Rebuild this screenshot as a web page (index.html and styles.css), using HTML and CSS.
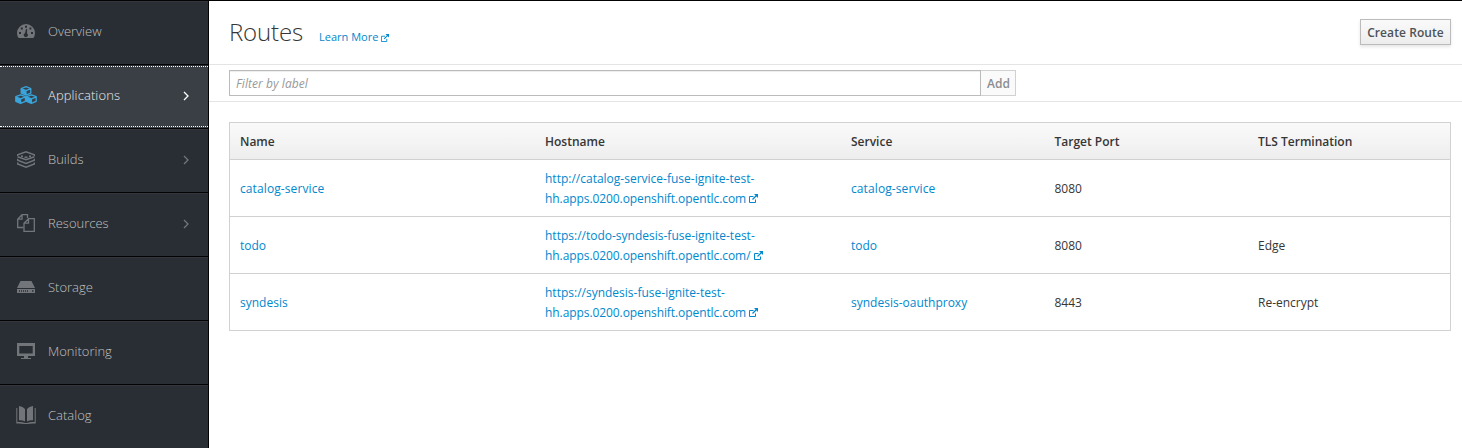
FILE: index.html
```html
<!DOCTYPE html>
<html lang="en">
<head>
<meta charset="utf-8">
<title>Routes</title>
<link rel="stylesheet" href="styles.css">
</head>
<body>
<svg class="defs" width="0" height="0">
  <symbol id="external" viewBox="0 0 9 9">
    <path d="M4.500 2.500H.5v6h6V5.500" fill="none" stroke="currentColor" stroke-width="1"/>
    <path d="M3.500 5.500 7.500 1.500" stroke="currentColor" stroke-width="1.200"/>
    <path d="M5 0h4v4z" fill="currentColor"/>
  </symbol>
  <symbol id="angle" viewBox="0 0 6 10">
    <path d="M1 1l4 4-4 4" fill="none" stroke="currentColor" stroke-width="1.300"/>
  </symbol>
</svg>
<div class="app">
  <nav class="sidebar">
    <a class="item">
      <span class="icon"><svg width="18" height="14" viewBox="0 0 18 14"><path fill="currentColor" fill-rule="evenodd" d="M1.600 14Q0 11.800 0 9a9 9 0 0 1 18 0q0 2.800-1.600 5zM8 1.800v2h2v-2zM3.800 3.600v2h2v-2zM12.400 3.600v2h2v-2zM2 8v2h2V8zM14 8v2h2V8zM9 5 8 9.200a2 2 0 1 0 2 .2L10.200 5z"/></svg></span>
      <span class="label">Overview</span>
    </a>
    <a class="item active">
      <span class="icon"><svg width="22" height="18" viewBox="0 0 22 18"><g fill="none" stroke="currentColor" stroke-width="1.300" stroke-linejoin="round"><path id="cube" d="M11 .7l4.800 1.800v4.600L11 9.100 6.200 7.100V2.500zM6.200 2.700 11 4.700l4.800-2M11 4.700v4.400"/><use href="#cube" x="-5.400" y="8.200"/><use href="#cube" x="5.400" y="8.200"/></g><path fill="currentColor" d="M6.200 2.600 11 4.700v4.400L6.200 7.100zM.8 10.800l4.800 2.100v4.400L.8 15.300zM11.600 10.800l4.800 2.100v4.400l-4.800-2z"/></svg></span>
      <span class="label">Applications</span>
      <svg class="chevron" width="6" height="10"><use href="#angle"/></svg>
    </a>
    <a class="item">
      <span class="icon"><svg width="18" height="17" viewBox="0 0 18 17"><g fill="none" stroke="currentColor" stroke-width="1.500"><path d="M.6 5V3.800L9 .9l8.400 2.900V5M.6 5.800 9 8.800l8.400-3"/><path d="M.6 7.800v1.400L9 12.400l8.400-3.200V7.800M.6 11.600V13L9 16.200l8.400-3.200v-1.400"/><path d="M4 5.300h2M7.500 6.300h3M12 5.300h2"/></g></svg></span>
      <span class="label">Builds</span>
      <svg class="chevron" width="6" height="10"><use href="#angle"/></svg>
    </a>
    <a class="item">
      <span class="icon"><svg width="18" height="18" viewBox="0 0 18 18"><g fill="none" stroke="currentColor" stroke-width="1.300"><path d="M6.500 13.500H.7V5.200L5 .7h5.500V4M5 .7v4.500H.7"/><path d="M11.500 4.700h5.800v12.600H7V9.200zM11.500 4.700v4.500H7"/></g></svg></span>
      <span class="label">Resources</span>
      <svg class="chevron" width="6" height="10"><use href="#angle"/></svg>
    </a>
    <a class="item">
      <span class="icon"><svg width="18" height="12" viewBox="0 0 18 12"><path fill="currentColor" fill-rule="evenodd" d="M3.500 0h11L18 7H0zM0 8h18v4H0zM2 9.200v1.600h1V9.200zM4 9.200v1.600h1V9.200zM6 9.200v1.600h1V9.200zM8 9.200v1.600h1V9.200zM10 9.200v1.600h1V9.200zM15 9.200v1.600h1.500V9.200z"/></svg></span>
      <span class="label">Storage</span>
    </a>
    <a class="item">
      <span class="icon"><svg width="18" height="16" viewBox="0 0 18 16"><path fill="currentColor" fill-rule="evenodd" d="M0 0h18v13h-7v2h3v1H4v-1h3v-2H0zM2.300 3v7.500h13.400V3z"/></svg></span>
      <span class="label">Monitoring</span>
    </a>
    <a class="item">
      <span class="icon"><svg width="20" height="18" viewBox="0 0 20 18"><path fill="currentColor" d="M3 0Q7 .3 9 3v12.500Q6.500 14 3 14.300zM17 0Q13 .3 11 3v12.500q2.500-1.500 6-1.200zM.3 2h1v14Q6 15.500 8.800 17h2.400q2.800-1.500 7.500-1V2h1v15.500q-4.700-.4-8 .5H8.300q-3.300-.9-8-.5z"/></svg></span>
      <span class="label">Catalog</span>
    </a>
  </nav>
  <main class="main">
    <header class="heading">
      <h1 class="title">Routes</h1>
      <a class="learn">Learn More <svg class="ext small" width="8" height="8"><use href="#external"/></svg></a>
      <button class="create">Create Route</button>
    </header>
    <div class="filter">
      <input class="field" type="text" placeholder="Filter by label">
      <button class="add" disabled>Add</button>
    </div>
    <table class="routes">
      <colgroup><col class="wide"><col class="mid"><col class="narrow"><col class="narrow"><col></colgroup>
      <thead><tr><th>Name</th><th>Hostname</th><th>Service</th><th>Target Port</th><th>TLS Termination</th></tr></thead>
      <tbody>
        <tr><td><a class="spaced">catalog-service</a></td><td><a>http://catalog-service-fuse-ignite-test-<br><span class="host">hh.apps.0200.openshift.opentlc.com</span> <svg class="ext" width="9" height="9"><use href="#external"/></svg></a></td><td><a class="spaced">catalog-service</a></td><td>8080</td><td></td></tr>
        <tr><td><a>todo</a></td><td><a>https://todo-syndesis-fuse-ignite-test-<br><span class="host">hh.apps.0200.openshift.opentlc.com/</span> <svg class="ext" width="9" height="9"><use href="#external"/></svg></a></td><td><a>todo</a></td><td>8080</td><td>Edge</td></tr>
        <tr><td><a>syndesis</a></td><td><a>https://syndesis-fuse-ignite-test-<br><span class="host">hh.apps.0200.openshift.opentlc.com</span> <svg class="ext" width="9" height="9"><use href="#external"/></svg></a></td><td><a>syndesis-oauthproxy</a></td><td>8443</td><td>Re-encrypt</td></tr>
      </tbody>
    </table>
  </main>
</div>
</body>
</html>
```
FILE: styles.css
```css
* { box-sizing: border-box; }
body {
  margin: 0;
  background: #fff;
  color: #363636;
  font: 12px/20px "Open Sans", sans-serif;
}
.defs { display: none; }
a { color: #0088ce; }
.app {
  display: flex;
  height: 448px;
  overflow: hidden;
  border-top: 1px solid #030303;
}
.sidebar {
  flex: 0 0 209px;
  background: #292e34;
  border-right: 1px solid #030303;
}
.item {
  display: flex;
  align-items: center;
  height: 64px;
  padding: 0 19px 4px 15px;
  border-top: 1px solid #35363d;
  border-bottom: 1px solid #030303;
  color: #72767b;
}
.icon {
  display: flex;
  justify-content: center;
  width: 22px;
  margin-right: 11px;
}
.label {
  flex: 1;
  margin-top: -1px;
  font-size: 13px;
  font-weight: 300;
  color: #d1d1d1;
  opacity: .9;
}
.chevron { margin-top: 2px; }
.active {
  position: relative;
  background: #393f44;
  color: #39a5dc;
  border-top-color: #292e34;
}
.active::after {
  content: "";
  position: absolute;
  inset: 0 0 1px;
  border: dotted #fff;
  border-width: 1px 0;
}
.active .label {
  color: #fff;
  letter-spacing: .1px;
}
.active .chevron { color: #fff; }
.main { flex: 1; }
.heading {
  display: flex;
  height: 64px;
  padding: 18px 11px 0 20px;
  border-bottom: 1px solid #e4e4e4;
}
.title {
  margin: 0;
  font-size: 24px;
  line-height: 26px;
  font-weight: 300;
  letter-spacing: -.15px;
}
.learn {
  margin: 8px 0 0 16px;
  font-size: 11px;
}
.ext { vertical-align: -1px; }
button {
  height: 26px;
  padding: 1px 6px 0;
  font: 600 12px/20px "Open Sans", sans-serif;
}
.create {
  width: 91px;
  margin-left: auto;
  border: 1px solid #bbb;
  background: linear-gradient(#fafafa, #ededed);
  box-shadow: 0 2px 3px rgba(3, 3, 3, .1);
  color: #4d5258;
  letter-spacing: .08px;
}
.filter {
  display: flex;
  height: 37px;
  padding: 5px 20px;
  border-bottom: 1px solid #e4e4e4;
}
.field {
  width: 752px;
  height: 26px;
  padding: 2px 6px;
  border: 1px solid #bbb;
  box-shadow: inset 0 1px 1px rgba(3, 3, 3, .075);
  font: 12px/20px "Open Sans", sans-serif;
}
.field::placeholder {
  color: #999;
  font-style: italic;
  letter-spacing: .07px;
}
.add {
  width: 35px;
  border: 1px solid #d1d1d1;
  border-left: 0;
  background: #fafafa;
  color: #8b8d8f;
}
.routes {
  width: 1222px;
  margin: 20px 0 0 20px;
  table-layout: fixed;
  border-collapse: collapse;
  border: 1px solid #d1d1d1;
}
.wide { width: 305.500px; }
.mid { width: 306px; }
.narrow { width: 203.500px; }
th {
  height: 37px;
  padding: 2px 10px 0;
  text-align: left;
  font-weight: 600;
}
thead { background: linear-gradient(#fafafa, #ededed); }
td {
  height: 57px;
  padding: 9px 10px 7px;
  border-top: 1px solid #d1d1d1;
}
.spaced { letter-spacing: .1px; }
.host { letter-spacing: -.08px; }
.host + .ext { vertical-align: 0; }
```
